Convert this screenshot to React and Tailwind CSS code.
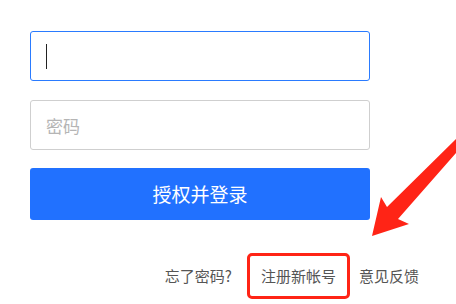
export default function App() {
  return (
    <div
      className="relative w-[456px] h-[304px] overflow-hidden bg-white"
      style={{ fontFamily: '"Noto Sans CJK SC", "Liberation Sans", sans-serif' }}
    >
      <div className="flex flex-col pt-[31px] px-[30px] w-[400px]">
        <div className="h-[50px] w-[340px] rounded-[3px] border border-[#2a7bff] flex items-center pl-[15px]">
          <span className="block w-px h-[25px] bg-[#222]" />
        </div>
        <div className="mt-[19px] h-[50px] w-[340px] rounded-[3px] border border-[#cfcfcf] flex items-center pl-[15px]">
          <span className="text-[17px] text-[#b5b5b5] leading-none">密码</span>
        </div>
        <button className="mt-[18px] h-[52px] w-[340px] rounded-[3px] bg-[#2171ff] text-white text-[19px] flex items-center justify-center">
          授权并登录
        </button>
      </div>

      <div className="flex justify-end items-center pr-[37px] mt-[33px] text-[15px] text-[#555]">
        <span>忘了密码?</span>
        <span className="ml-[15px] h-[46px] flex items-center px-[11px] border-[3px] border-[#ff2416] rounded-[5px]">
          注册新帐号
        </span>
        <span className="ml-[9px]">意见反馈</span>
      </div>

      <svg className="absolute left-0 top-0" width="456" height="304" viewBox="0 0 456 304">
        <polygon
          points="456,139 387,207 381,197 372,236 409,224 398,219 456,153"
          fill="#ff2416"
        />
      </svg>
    </div>
  );
}
